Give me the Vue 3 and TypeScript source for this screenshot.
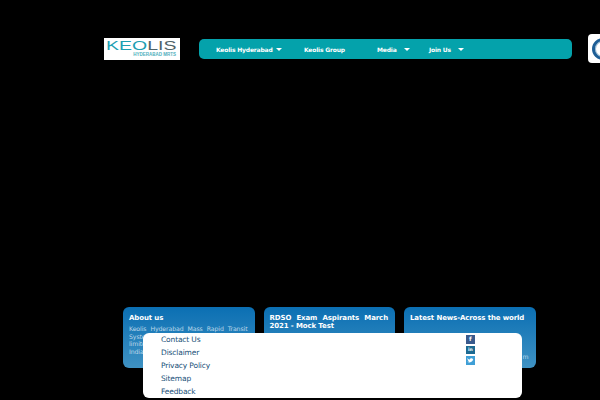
<script setup lang="ts">
const navItems = [
  { label: 'Keolis Hyderabad', caret: true },
  { label: 'Keolis Group', caret: false },
  { label: 'Media', caret: true },
  { label: 'Join Us', caret: true },
]

const cards = [
  {
    title: 'About us',
    body: 'Keolis Hyderabad Mass Rapid Transit System Operation & Maintenance Pvt limited, is a subsidiary of Keolis group, India',
  },
  { title: 'RDSO Exam Aspirants March 2021 - Mock Test', body: '' },
  { title: 'Latest News-Across the world', body: 'm' },
]

const footerLinks = ['Contact Us', 'Disclaimer', 'Privacy Policy', 'Sitemap', 'Feedback']
</script>

<template>
  <div class="page">
    <header class="header">
      <div class="logo">
        <div class="logo-name"><span class="teal">KEO</span><span class="grey">LIS</span></div>
        <div class="logo-sub">HYDERABAD MRTS</div>
      </div>
      <nav class="nav">
        <a v-for="item in navItems" :key="item.label" class="nav-item">
          {{ item.label }}
          <i v-if="item.caret" class="caret"></i>
        </a>
      </nav>
      <div class="badge">
        <div class="ring"></div>
      </div>
    </header>

    <section class="cards">
      <article v-for="card in cards" :key="card.title" class="card">
        <h3>{{ card.title }}</h3>
        <p v-if="card.body">{{ card.body }}</p>
      </article>
    </section>

    <footer class="footer">
      <ul class="links">
        <li v-for="link in footerLinks" :key="link">{{ link }}</li>
      </ul>
      <div class="social">
        <span class="icon fb">f</span>
        <span class="icon li">in</span>
        <span class="icon tw">
          <svg viewBox="0 0 8 8" width="8" height="8">
            <path d="M1 2c1 1 2 1.500 3 1.500C4 2.300 5.500 1.800 6.200 2.700L7 2.400 6.600 3.200 7.200 3.100C7 4.800 5.800 6.400 3.500 6.400 2.600 6.400 1.800 6.100 1.200 5.700 2 5.800 2.600 5.600 3.100 5.200 2.400 5.100 2 4.700 1.800 4.200L2.400 4.200C1.700 3.900 1.300 3.300 1.300 2.700Z" fill="#fff" />
          </svg>
        </span>
      </div>
    </footer>
  </div>
</template>

<style scoped>
.page {
  position: relative;
  width: 600px;
  height: 400px;
  overflow: hidden;
  background: #000;
  font-family: "DejaVu Sans", sans-serif;
}

.header {
  display: flex;
  align-items: flex-start;
  height: 307px;
  padding: 34px 0 0 104px;
  box-sizing: border-box;
}

.logo {
  flex: none;
  width: 76px;
  height: 22px;
  margin-top: 4px;
  background: #fff;
  overflow: hidden;
}

.logo-name {
  width: 46px;
  margin: 2px 0 0 2px;
  font-family: "Liberation Sans", sans-serif;
  font-size: 12.5px;
  line-height: 12px;
  white-space: nowrap;
  transform: scaleX(1.56);
  transform-origin: left center;
}

.teal {
  color: #1e9fb2;
}

.grey {
  color: #4f6368;
}

.logo-sub {
  margin-right: 4px;
  font-family: "Liberation Sans", sans-serif;
  font-size: 4.5px;
  line-height: 6px;
  font-weight: 700;
  color: #4fb0bd;
  text-align: right;
  white-space: nowrap;
}

.nav {
  flex: none;
  display: flex;
  align-items: center;
  width: 373px;
  height: 20px;
  margin: 5px 0 0 19px;
  padding-left: 17px;
  box-sizing: border-box;
  border-radius: 5px;
  background: #04a2ab;
}

.nav-item {
  display: flex;
  align-items: center;
  color: #fff;
  font-size: 6px;
  letter-spacing: -0.18px;
  font-weight: 700;
  white-space: nowrap;
}

.nav-item:nth-child(1) {
  width: 88px;
}

.nav-item:nth-child(2) {
  width: 73px;
}

.nav-item:nth-child(3) {
  width: 52px;
}

.nav-item:nth-child(1) .caret {
  margin-left: 3px;
}

.caret {
  width: 0;
  height: 0;
  margin-left: 7px;
  border: 3px solid transparent;
  border-top-color: #fff;
  border-bottom: 0;
}

.badge {
  flex: none;
  display: flex;
  align-items: center;
  width: 40px;
  height: 29px;
  margin-left: 16px;
  padding-left: 4px;
  box-sizing: border-box;
  border-radius: 4px;
  background: #fff;
}

.ring {
  flex: none;
  width: 22px;
  height: 22px;
  box-sizing: border-box;
  border: 3px solid #1d5e96;
  border-radius: 50%;
  box-shadow: inset 0 0 0 1px #9fc0d8;
}

.cards {
  display: flex;
  gap: 9px;
  padding-left: 123px;
}

.card {
  flex: none;
  width: 131.500px;
  height: 61px;
  padding: 7px 7px 0 6px;
  box-sizing: border-box;
  border-radius: 6px;
  background: linear-gradient(#0b6fb3, #3f92c3);
  color: #fff;
}

.card h3 {
  margin: 0;
  font-size: 7px;
  letter-spacing: -0.12px;
  line-height: 8.300px;
  font-weight: 700;
  text-align: justify;
}

.card p {
  margin: 3px 0 0;
  font-size: 6.200px;
  letter-spacing: -0.1px;
  line-height: 7.600px;
  color: #bcd8ea;
  text-align: justify;
}

.card:nth-child(3) p {
  margin-top: 31px;
  text-align: right;
}

.footer {
  position: absolute;
  left: 143px;
  top: 333px;
  width: 379px;
  height: 65px;
  display: flex;
  background: #fff;
  border-radius: 6px;
}

.links {
  width: 323px;
  margin: 0;
  padding: 0 0 0 18px;
  box-sizing: border-box;
  list-style: none;
  color: #174f78;
  font-size: 7.500px;
  letter-spacing: -0.15px;
  line-height: 13px;
}

.social {
  display: flex;
  flex-direction: column;
  gap: 2px;
  padding-top: 2px;
}

.icon {
  display: flex;
  align-items: center;
  justify-content: center;
  width: 8.500px;
  height: 8.500px;
  color: #fff;
  font-size: 6px;
  line-height: 1;
  font-weight: 700;
}

.fb {
  background: #3a5a8c;
}

.li {
  background: #1d6a92;
  font-size: 4.500px;
}

.tw {
  background: #3f9fd6;
}
</style>

<style>
html,
body {
  margin: 0;
  background: #000;
}
</style>
